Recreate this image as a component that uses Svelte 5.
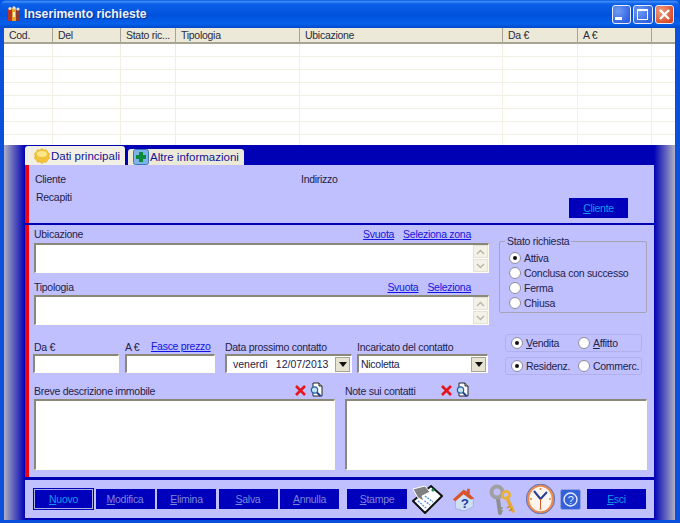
<script>
  const columns = ['Cod.', 'Del', 'Stato ric...', 'Tipologia', 'Ubicazione', 'Da €', 'A €', '']
  const rows = [1, 2, 3, 4, 5, 6, 7, 8]
  const stati = ['Attiva', 'Conclusa con successo', 'Ferma', 'Chiusa']
  const buttons = ['Nuovo', 'Modifica', 'Elimina', 'Salva', 'Annulla']
</script>

{#snippet scroller()}
  <div class="scroller">
    <span class="arrow"><svg width="9" height="6" viewBox="0 0 9 6"><path d="M1 5L4.5 1.5L8 5" fill="none" stroke="#b9b9a8" stroke-width="1.5"/></svg></span>
    <span class="arrow"><svg width="9" height="6" viewBox="0 0 9 6"><path d="M1 1L4.5 4.5L8 1" fill="none" stroke="#b9b9a8" stroke-width="1.5"/></svg></span>
  </div>
{/snippet}

{#snippet noteTools()}
  <span class="note-tools">
    <svg width="13" height="13" viewBox="0 0 13 13"><path d="M2 2L11 11M11 2L2 11" stroke="#e8141c" stroke-width="2.6"/></svg>
    <svg width="15" height="16" viewBox="0 0 15 16">
      <path d="M4 1H10L13 4V14H4Z" fill="#fff" stroke="#222"/>
      <path d="M10 1V4H13" fill="#ccc" stroke="#222"/>
      <circle cx="5.5" cy="8" r="3.2" fill="#bfe3f5" stroke="#2a5f9a" stroke-width="1.2"/>
      <path d="M8 10.5L11.5 14" stroke="#1f3f90" stroke-width="2"/>
    </svg>
  </span>
{/snippet}

{#snippet drop()}
  <span class="drop"><svg width="8" height="5" viewBox="0 0 8 5"><path d="M0 0H8L4 5Z" fill="#111"/></svg></span>
{/snippet}

<div class="window">
  <header class="titlebar">
    <svg class="app-icon" width="14" height="16" viewBox="0 0 14 16">
      <rect x="1" y="3" width="4" height="12" fill="#b8342a"/>
      <rect x="5" y="2" width="4" height="13" fill="#e4a528"/>
      <rect x="9" y="4" width="4" height="11" fill="#8a3a30"/>
      <circle cx="3" cy="2.5" r="1.6" fill="#efe3d0"/>
      <circle cx="7" cy="1.8" r="1.6" fill="#efe3d0"/>
      <circle cx="11" cy="3" r="1.6" fill="#efe3d0"/>
      <rect x="6" y="6" width="2" height="5" fill="#fff3c8"/>
    </svg>
    <span class="title">Inserimento richieste</span>
    <div class="caption-btns">
      <span class="cap blue"><i class="min"></i></span>
      <span class="cap blue"><i class="max"></i></span>
      <span class="cap red">
        <svg width="13" height="13" viewBox="0 0 13 13"><path d="M2 2L11 11M11 2L2 11" stroke="#fff" stroke-width="2.4"/></svg>
      </span>
    </div>
  </header>

  <div class="client">
    <div class="list">
      <div class="list-row head">
        {#each columns as c}<div class="th">{c}</div>{/each}
      </div>
      {#each rows as r (r)}
        <div class="list-row">
          {#each columns as c}<div class="td"></div>{/each}
        </div>
      {/each}
    </div>

    <div class="panel">
      <div class="tabs">
        <div class="tab active">
          <svg width="16" height="16" viewBox="0 0 16 16">
            <path d="M8 0.5L10 2L12.5 1.8L13.5 4L15.5 5.5L15 8L15.5 10.5L13.5 12L12.5 14.2L10 14L8 15.5L6 14L3.5 14.2L2.5 12L0.5 10.5L1 8L0.5 5.5L2.5 4L3.5 1.8L6 2Z" fill="#f2c33c" stroke="#e6ab2a" stroke-width="0.6"/>
            <ellipse cx="8" cy="6" rx="5" ry="3" fill="#fbe88a"/>
          </svg>
          Dati principali
        </div>
        <div class="tab">
          <svg width="16" height="16" viewBox="0 0 16 16">
            <rect x="0.5" y="0.5" width="15" height="15" rx="2" fill="#7fb2e6" stroke="#3c78b8"/>
            <path d="M6 3H10V6H13V10H10V13H6V10H3V6H6Z" fill="#0c8a3c"/>
          </svg>
          Altre informazioni
        </div>
      </div>

      <section class="sec client-sec">
        <div class="client-col">
          <span>Cliente</span>
          <span>Recapiti</span>
        </div>
        <span class="indirizzo">Indirizzo</span>
        <span class="cmd cliente"><u>C</u>liente</span>
      </section>

      <section class="sec form">
        <div class="form-top">
          <div class="left">
            <div class="field-head">
              <span>Ubicazione</span>
              <span class="links"><a href="#s">Svuota</a><a href="#z">Seleziona zona</a></span>
            </div>
            <div class="box tall">{@render scroller()}</div>

            <div class="field-head second">
              <span>Tipologia</span>
              <span class="links"><a href="#s">Svuota</a><a href="#z">Seleziona</a></span>
            </div>
            <div class="box tall">{@render scroller()}</div>

            <div class="inputs">
              <div class="cell da">
                <span class="cell-label">Da €</span>
                <div class="box single"></div>
              </div>
              <div class="cell a">
                <span class="cell-label">A € <a href="#f">Fasce prezzo</a></span>
                <div class="box single"></div>
              </div>
              <div class="cell data">
                <span class="cell-label">Data prossimo contatto</span>
                <div class="box single combo"><span class="value date">venerdì&nbsp; 12/07/2013</span>{@render drop()}</div>
              </div>
              <div class="cell inc">
                <span class="cell-label">Incaricato del contatto</span>
                <div class="box single combo"><span class="value">Nicoletta</span>{@render drop()}</div>
              </div>
            </div>
          </div>

          <div class="right">
            <fieldset class="stato">
              <legend>Stato richiesta</legend>
              {#each stati as s, i}
                <div class="radio-row"><span class="radio" class:on={i === 0}></span>{s}</div>
              {/each}
            </fieldset>
            <div class="opts first">
              <div class="radio-row"><span class="radio on"></span><span><u>V</u>endita</span></div>
              <div class="radio-row"><span class="radio"></span><span><u>A</u>ffitto</span></div>
            </div>
            <div class="opts">
              <div class="radio-row"><span class="radio on"></span>Residenz.</div>
              <div class="radio-row"><span class="radio"></span>Commerc.</div>
            </div>
          </div>
        </div>

        <div class="form-bottom">
          <div class="note">
            <div class="note-head"><span>Breve descrizione immobile</span>{@render noteTools()}</div>
            <div class="box note-box"></div>
          </div>
          <div class="note">
            <div class="note-head"><span>Note sui contatti</span>{@render noteTools()}</div>
            <div class="box note-box"></div>
          </div>
        </div>
      </section>

      <footer class="toolbar">
        <div class="cmds">
          {#each buttons as b, i}
            <span class="cmd" class:focus={i === 0}><u>{b[0]}</u>{b.slice(1)}</span>
          {/each}
        </div>
        <span class="cmd stampe"><u>S</u>tampe</span>
        <div class="tool-icons">
          <svg class="mail" width="31" height="30" viewBox="0 0 31 30">
            <path d="M1 17L13 29L30 12L19 2Z" fill="#fff" stroke="#111" stroke-width="2"/>
            <path d="M6 17L14 24M10 15L18 21M13 12L21 18" stroke="#5b8fe0" stroke-width="1.4" stroke-dasharray="2 1"/>
            <path d="M1 5L13 2L18 8L10 12L12 17L6 14Z" fill="#808080" stroke="#fff"/>
            <circle cx="21" cy="6" r="1.6" fill="#109040"/>
          </svg>
          <svg class="house" width="25" height="25" viewBox="0 0 28 28">
            <path d="M5 13V24L15 27L25 22V12L15 6Z" fill="#cfe0f5" stroke="#9ab2d8"/>
            <path d="M2 14L14 3L18 5V2L21 2V8L26 13L22 14L14 8L5 16Z" fill="#d9532b"/>
            <text x="11" y="24" class="house-q">?</text>
          </svg>
          <svg class="keys" width="28" height="31" viewBox="0 0 28 31">
            <path d="M10 15L12 29" stroke="#8f8f8f" stroke-width="4" stroke-linecap="round"/>
            <path d="M12 24H15M12.5 27H15" stroke="#8f8f8f" stroke-width="1.5"/>
            <circle cx="9" cy="8" r="5.5" fill="none" stroke="#a0a0a0" stroke-width="4"/>
            <path d="M19 14L25 27" stroke="#e5a935" stroke-width="3.4" stroke-linecap="round"/>
            <path d="M22 22L19 24M24 25L21 27" stroke="#c98a1e" stroke-width="1.5"/>
            <circle cx="18" cy="11" r="3.6" fill="none" stroke="#eab13a" stroke-width="2.8"/>
          </svg>
          <svg class="clock" width="29" height="30" viewBox="0 0 29 30">
            <ellipse cx="14.5" cy="15" rx="12.5" ry="13.5" fill="#fdf6ee" stroke="#e68a52" stroke-width="2.6"/>
            <ellipse cx="14.5" cy="15" rx="14.2" ry="14.8" fill="none" stroke="#5c6fb8"/>
            <path d="M14.5 15L8 7M14.5 15L21 8" stroke="#2a3d90" stroke-width="2"/>
            <path d="M14.5 15V25" stroke="#d9532b"/>
            <circle cx="14.5" cy="5" r="1" fill="#e0824a"/>
            <circle cx="24" cy="15" r="1" fill="#e0824a"/>
            <circle cx="5" cy="15" r="1" fill="#e0824a"/>
            <circle cx="14.5" cy="25" r="1" fill="#e0824a"/>
          </svg>
          <svg class="help" width="21" height="21" viewBox="0 0 21 21">
            <rect x="0.5" y="0.5" width="20" height="20" rx="2" fill="#3560d8" stroke="#8ea0e8"/>
            <circle cx="10.5" cy="10.5" r="6.5" fill="none" stroke="#e6ecff" stroke-width="1.4"/>
            <text x="7.7" y="14.5" class="help-q">?</text>
          </svg>
        </div>
        <span class="cmd esci"><u>E</u>sci</span>
      </footer>
    </div>
  </div>
</div>

<style>
  :global(body) {
    margin: 0;
    background: #0054e3;
  }

  .window {
    width: 680px;
    height: 523px;
    display: flex;
    flex-direction: column;
    overflow: hidden;
    border-radius: 7px 7px 0 0;
    background: #0a50dc;
    font-family: "Liberation Sans", Arial, sans-serif;
    font-size: 10.5px;
    letter-spacing: -0.28px;
    color: #22224a;
  }

  .titlebar {
    height: 28px;
    flex: none;
    display: flex;
    align-items: center;
    padding: 0 6px 0 7px;
    box-sizing: border-box;
    letter-spacing: 0;
    background: linear-gradient(#0a5be6 0, #3d8cf5 6%, #0b5fe8 14%, #0052dc 55%, #0560ea 85%, #0348c8 100%);
  }
  .app-icon {
    margin-right: 3px;
  }
  .title {
    color: #f0f4ff;
    font-size: 12.2px;
    font-weight: bold;
    text-shadow: 1px 1px 1px #0a2f90;
  }
  .caption-btns {
    margin-left: auto;
    display: flex;
    gap: 2px;
  }
  .cap {
    width: 19.5px;
    height: 19px;
    box-sizing: border-box;
    border: 1px solid #e8eeff;
    border-radius: 3px;
    display: flex;
    align-items: center;
    justify-content: center;
    position: relative;
  }
  .cap.blue {
    background: radial-gradient(circle at 30% 30%, #6f9cf2, #2f5fe0 80%);
  }
  .cap.red {
    background: radial-gradient(circle at 30% 30%, #f0a080, #d8482a 80%);
  }
  .min {
    width: 7px;
    height: 3px;
    background: #fff;
    align-self: flex-end;
    margin: 0 5px 3px 0;
  }
  .max {
    width: 9px;
    height: 8px;
    border: 1px solid #fff;
    border-top-width: 2px;
  }

  .client {
    flex: 1;
    display: flex;
    flex-direction: column;
    margin: 0 5px 3px 4px;
    min-height: 0;
  }

  .list {
    height: 117px;
    flex: none;
    overflow: hidden;
    background: #fff;
  }
  .list-row {
    display: grid;
    grid-template-columns: 49px 68px 55px 124px 203px 75px 74px 23px;
    height: 13px;
    box-sizing: border-box;
    border-bottom: 1px solid #f1efe2;
  }
  .list-row.head {
    height: 16px;
    border-bottom: 2px solid #a8a494;
    background: #ece9d8;
  }
  .th {
    padding: 1px 0 0 5px;
    border-right: 1px solid #a8a494;
    white-space: nowrap;
    overflow: hidden;
    color: #2b2b40;
  }
  .th:last-child {
    border-right: 0;
  }
  .td {
    border-right: 1px solid #f1efe2;
  }
  .td:last-child {
    border-right: 0;
  }

  .panel {
    flex: 1;
    display: flex;
    flex-direction: column;
    padding: 2px 21px 2px 21px;
    min-height: 0;
    background:
      linear-gradient(90deg, #aeb0c4 0, #0000b4 21px, #0000b4 650px, #aeb0c4 671px);
  }

  .tabs {
    height: 18px;
    flex: none;
    display: flex;
    align-items: flex-end;
    gap: 3px;
    color: #12129a;
    font-size: 11.5px;
    letter-spacing: 0;
  }
  .tab {
    height: 16px;
    display: flex;
    align-items: center;
    gap: 1px;
    padding: 0 5px 0 5px;
    background: #ece9d8;
    border-radius: 3px 3px 0 0;
    white-space: nowrap;
  }
  .tab.active {
    height: 19px;
    width: 100px;
    box-sizing: border-box;
    padding-left: 9px;
    background: #f2f0e4;
  }

  .sec {
    background: #c0c0ff;
    border-left: 4px solid #f00010;
  }

  .client-sec {
    height: 58px;
    flex: none;
    display: flex;
    position: relative;
    box-sizing: border-box;
    padding: 8px 26px 0 6px;
    color: #222244;
  }
  .client-col {
    width: 266px;
    display: flex;
    flex-direction: column;
    gap: 5px;
  }
  .client-col span {
    height: 13px;
  }
  .client-col span:last-child {
    padding-left: 1px;
  }
  .cliente {
    margin: 25px 0 0 auto;
  }

  .cmd {
    width: 59px;
    height: 20px;
    box-sizing: border-box;
    display: flex;
    align-items: center;
    justify-content: center;
    background: #0000bc;
    color: #7d86d8;
    flex: none;
  }
  .cmd.cliente,
  .cmd.esci,
  .cmd.focus {
    color: #0f9be8;
  }
  .cmd.focus {
    outline: 1px solid #0000bc;
    border: 1px solid #b0b0e0;
  }

  .form {
    flex: 1;
    min-height: 0;
    margin-top: 2px;
    padding: 0 7px 4px 5px;
    color: #22224a;
  }
  .form-top {
    display: flex;
    gap: 10px;
    height: 148px;
  }
  .left {
    width: 455px;
    flex: none;
  }
  .field-head {
    height: 18px;
    display: flex;
    justify-content: space-between;
    align-items: center;
    padding: 0 18px 0 0;
    box-sizing: border-box;
  }
  .field-head.second {
    margin-top: 4px;
    padding-top: 2px;
  }
  .links {
    display: flex;
    gap: 9px;
  }
  a {
    color: #1414e0;
  }

  .box {
    box-sizing: border-box;
    background: #fff;
    border: 1px solid #fffdf0;
    border-top: 2px solid #8c8878;
    border-left: 2px solid #8c8878;
    position: relative;
  }
  .tall {
    height: 30px;
  }
  .scroller {
    position: absolute;
    right: 0;
    top: 0;
    bottom: 0;
    width: 15px;
    display: flex;
    flex-direction: column;
    gap: 1px;
    background: #fff;
  }
  .arrow {
    flex: 1;
    display: flex;
    align-items: center;
    justify-content: center;
    background: #f3f1e8;
    border: 1px solid #e4e2d6;
    box-sizing: border-box;
  }

  .inputs {
    display: flex;
    margin-top: 14px;
    margin-left: -1px;
  }
  .cell {
    flex: none;
  }
  .da {
    width: 86px;
  }
  .a {
    width: 90px;
    margin-left: 6px;
  }
  .data {
    width: 127px;
    margin-left: 10px;
  }
  .inc {
    width: 131px;
    margin-left: 5px;
  }
  .cell-label {
    display: block;
    height: 15px;
    line-height: 17px;
    white-space: nowrap;
  }
  .cell.da .cell-label {
    padding-left: 1px;
  }
  .cell.a .cell-label a {
    margin-left: 9px;
    position: relative;
    top: -1px;
  }
  .single {
    height: 19px;
  }
  .combo {
    display: flex;
    align-items: center;
    justify-content: space-between;
    color: #22224a;
  }
  .value {
    padding-left: 2px;
  }
  .value.date {
    padding-left: 6px;
    white-space: nowrap;
    letter-spacing: 0;
    word-spacing: 1px;
  }
  .drop {
    width: 15px;
    height: 15px;
    margin-right: 1px;
    background: #e6e3d2;
    border: 1px solid #a8a494;
    box-sizing: border-box;
    display: flex;
    align-items: center;
    justify-content: center;
  }

  .right {
    width: 148px;
    flex: none;
    padding-top: 12px;
    box-sizing: border-box;
  }
  .stato {
    margin: 0;
    height: 76px;
    box-sizing: border-box;
    padding: 4px 0 0 9px;
    border: 1px solid #a4a4b4;
    border-radius: 2px;
  }
  .stato legend {
    padding: 0 2px;
    margin-left: -4px;
    line-height: 9px;
  }
  .radio-row {
    height: 15px;
    display: flex;
    align-items: center;
    gap: 3px;
    white-space: nowrap;
  }
  .radio {
    width: 10px;
    height: 10px;
    border-radius: 50%;
    flex: none;
    background: #fff;
    border: 1px solid #8c8c9c;
    display: flex;
    align-items: center;
    justify-content: center;
  }
  .radio.on::after {
    content: '';
    width: 4px;
    height: 4px;
    border-radius: 50%;
    background: #111;
  }

  .opts {
    width: 137px;
    height: 18px;
    margin: 5px 0 0 6px;
    box-sizing: border-box;
    display: grid;
    grid-template-columns: 67px 1fr;
    align-items: center;
    padding-left: 5px;
    border: 1px solid #b0b0ee;
    border-radius: 3px;
  }
  .opts.first {
    margin-top: 21px;
  }

  .form-bottom {
    display: flex;
    gap: 10px;
    margin-top: 9px;
  }
  .note {
    width: 301px;
  }
  .note:last-child {
    width: 302px;
  }
  .note-head {
    height: 17px;
    padding: 1px 11px 0 0;
    display: flex;
    align-items: center;
    justify-content: space-between;
    box-sizing: border-box;
  }
  .note:last-child .note-head {
    justify-content: flex-start;
    white-space: nowrap;
  }
  .note-tools {
    display: flex;
    align-items: center;
    gap: 2px;
    margin-top: -2px;
  }
  .note:last-child .note-tools {
    margin-left: 24px;
  }
  .note-box {
    height: 71px;
  }

  .toolbar {
    height: 38px;
    flex: none;
    margin-top: 3px;
    background: #c0c0ff;
    display: flex;
    align-items: center;
    padding: 0 8px 0 9px;
    color: #7d86d8;
  }
  .cmds {
    display: flex;
    gap: 2.5px;
  }
  .stampe {
    margin-left: 8px;
    width: 60px;
  }
  .tool-icons {
    display: flex;
    align-items: center;
    margin-left: 5px;
    width: 174px;
  }
  .house {
    margin-left: 8px;
  }
  .keys {
    margin-left: 12px;
  }
  .clock {
    margin-left: 10px;
  }
  .help {
    margin-left: 5px;
  }
  .house-q {
    font-size: 15px;
    font-weight: bold;
    fill: #2040a8;
  }
  .help-q {
    font-size: 11px;
    fill: #e6ecff;
  }
  .esci {
    margin-left: auto;
  }
</style>
